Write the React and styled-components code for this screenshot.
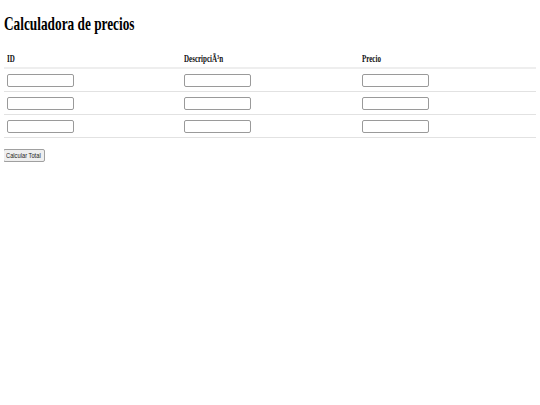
import React from 'react'
import { styled, createGlobalStyle } from 'styled-components'

const Global = createGlobalStyle`
  body {
    margin: 4px;
    background: #fff;
    font-family: "Liberation Serif", "Times New Roman", serif;
    color: #000;
  }
`;

const rows = [1, 2, 3];

const App = () => {
  return (
    <>
      <Global />
      <Page>
        <Title><Squeeze>Calculadora de precios</Squeeze></Title>
        <Table>
          <thead>
            <tr>
              <Th><Squeeze>ID</Squeeze></Th>
              <Th><Squeeze>DescripciÃ³n</Squeeze></Th>
              <Th><Squeeze>Precio</Squeeze></Th>
            </tr>
          </thead>
          <tbody>
            {rows.map((r) => (
              <Row key={r}>
                <Td><Field type="text" /></Td>
                <Td><Field type="text" /></Td>
                <Td><Field type="text" /></Td>
              </Row>
            ))}
          </tbody>
        </Table>
        <Button type="button"><ButtonText>Calcular Total</ButtonText></Button>
      </Page>
    </>
  )
}

const Page = styled.div`
  display: flex;
  flex-direction: column;
  align-items: flex-start;
`;

const Squeeze = styled.span`
  display: inline-block;
  transform: scaleX(0.7);
  transform-origin: left center;
  white-space: nowrap;
`;

const Title = styled.h1`
  font-size: 19px;
  font-weight: bold;
  line-height: 22px;
  margin: 9px 0 12px;
`;

const Table = styled.table`
  width: 100%;
  border-collapse: collapse;
  table-layout: fixed;
`;

const Th = styled.th`
  text-align: left;
  font-size: 10px;
  font-weight: bold;
  color: #111;
  height: 21px;
  padding: 2px 3px 0;
  box-sizing: border-box;
  border-bottom: 2px solid #eee;
`;

const Row = styled.tr`
  border-bottom: 1px solid #e2e2e2;
`;

const Td = styled.td`
  padding: 5px 3px 4px;
  height: 23px;
  box-sizing: border-box;
`;

const Field = styled.input`
  display: block;
  box-sizing: border-box;
  width: 67px;
  height: 13px;
  margin: 0;
  padding: 0 2px;
  border: 1px solid #9a9a9a;
  border-radius: 2px;
  background: #fff;
  font-size: 8px;
`;

const Button = styled.button`
  margin-top: 11px;
  margin-left: -1px;
  box-sizing: border-box;
  width: 42px;
  height: 13px;
  padding: 0 2px;
  border: 1px solid #a0a0a0;
  border-radius: 2px;
  background: #efefef;
  font-family: "Liberation Sans", Arial, sans-serif;
  font-size: 7px;
  color: #222;
  overflow: hidden;
  white-space: nowrap;
  display: flex;
  align-items: center;
`;

const ButtonText = styled.span`
  display: inline-block;
  transform: scaleX(0.82);
  transform-origin: left center;
`;

export default App
